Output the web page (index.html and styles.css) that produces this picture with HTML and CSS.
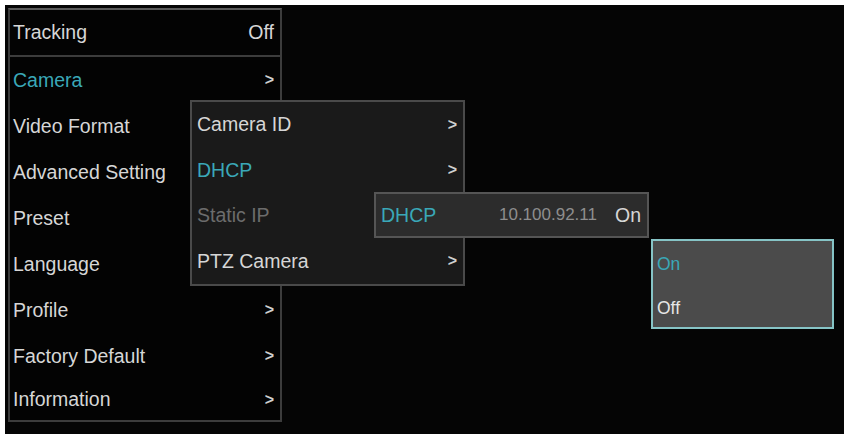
FILE: index.html
```html
<!DOCTYPE html>
<html lang="en">
<head>
    <meta charset="UTF-8">
    <meta name="viewport" content="width=device-width, initial-scale=1.0">
    <title>OSD Menu</title>
    <link rel="stylesheet" href="styles.css">
</head>
<body>
    <div class="screen">
        <!-- Main OSD menu -->
        <div class="menu main-menu">
            <div class="row head"><span>Tracking</span><span>Off</span></div>
            <div class="row active"><span>Camera</span><span class="arrow">&gt;</span></div>
            <div class="row"><span>Video Format</span></div>
            <div class="row"><span>Advanced Setting</span></div>
            <div class="row"><span>Preset</span></div>
            <div class="row"><span>Language</span></div>
            <div class="row"><span>Profile</span><span class="arrow">&gt;</span></div>
            <div class="row"><span>Factory Default</span><span class="arrow">&gt;</span></div>
            <div class="row"><span>Information</span><span class="arrow">&gt;</span></div>
        </div>

        <!-- Camera submenu -->
        <div class="menu sub-menu">
            <div class="row"><span>Camera ID</span><span class="arrow">&gt;</span></div>
            <div class="row active"><span>DHCP</span><span class="arrow">&gt;</span></div>
            <div class="row disabled"><span>Static IP</span></div>
            <div class="row"><span>PTZ Camera</span><span class="arrow">&gt;</span></div>
        </div>

        <!-- DHCP value line -->
        <div class="menu dhcp-menu">
            <div class="row"><span class="active-text">DHCP</span><span class="ip">10.100.92.11</span><span>On</span></div>
        </div>

        <!-- On / Off picker -->
        <div class="menu pick-menu">
            <div class="row active"><span>On</span></div>
            <div class="row"><span>Off</span></div>
        </div>
    </div>
</body>
</html>
```

FILE: styles.css
```css
body {
    margin: 0;
    background: #fff;
    font-family: "Liberation Sans", Arial, sans-serif;
}
.screen {
    position: relative;
    margin: 5px 0 0 5px;
    width: 839px;
    height: 430px;
    background: #050505;
    padding: 3px 0 0 3px;
    box-sizing: border-box;
}
.menu {
    color: #d6d6d6;
    font-size: 19.5px;
    box-sizing: border-box;
}
.row {
    display: flex;
    align-items: center;
    justify-content: space-between;
    height: 46px;
    padding: 0 6px 0 3px;
}
.arrow {
    font-size: 16px;
    font-weight: bold;
    color: #cfcfcf;
}
.active, .active-text {
    color: #3aa8b8;
}
.active .arrow {
    color: #cfcfcf;
}
.disabled {
    color: #6c6c6c;
}

.main-menu {
    width: 274px;
    border: 2px solid #3c3c3c;
    border-top-color: #5a5a5a;
    background: #030303;
}
.main-menu .head {
    border-bottom: 2px solid #3c3c3c;
    height: 45px;
}
.main-menu .row:last-child {
    height: 41px;
}

.sub-menu {
    position: absolute;
    left: 185px;
    top: 95px;
    width: 275px;
    border: 2px solid #4a4a4a;
    background: #1a1a1a;
}
.sub-menu .row {
    padding: 0 6px 0 5px;
    height: 45.5px;
}

.dhcp-menu {
    position: absolute;
    left: 369px;
    top: 187px;
    width: 275px;
    height: 46px;
    border: 2px solid #555;
    background: #2c2c2c;
}
.dhcp-menu .row {
    height: 42px;
    padding: 0 6px 0 5px;
}
.dhcp-menu .ip {
    margin-left: auto;
    margin-right: 18px;
    color: #8e8e8e;
    font-size: 17px;
}

.pick-menu {
    position: absolute;
    left: 646px;
    top: 234px;
    width: 183px;
    height: 90px;
    border: 2px solid #86c4c6;
    background: #4b4b4b;
    padding-top: 1px;
}
.pick-menu .row {
    height: 44px;
    padding: 0 4px;
    font-size: 17.5px;
}
.pick-menu .row + .row {
    color: #e6e6e6;
}
```
